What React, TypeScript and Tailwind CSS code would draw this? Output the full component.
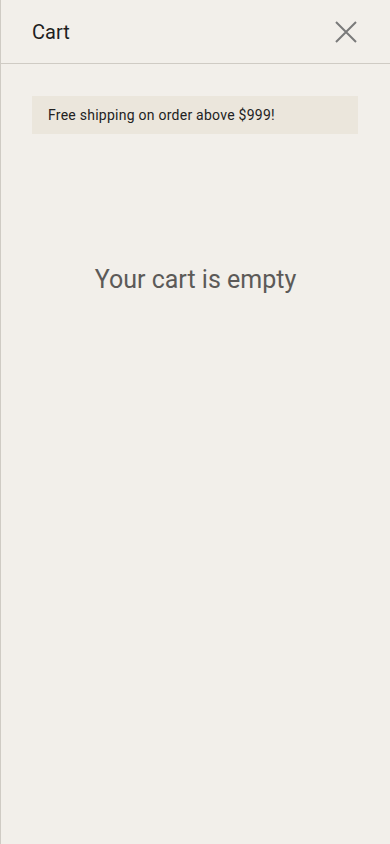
export default function App() {
  return (
    <div
      className="min-h-[844px] w-full bg-[#f2efea] border-l border-[#cfcbc4] flex flex-col"
      style={{ fontFamily: "Roboto, 'Liberation Sans', sans-serif" }}
    >
      {/* HEADER */}
      <div className="h-16 flex items-center justify-between pl-[31px] pr-[33px] border-b border-[#cfcbc4]">
        <h2 className="text-[20px] text-[#1f1f1f] leading-none">Cart</h2>
        <button aria-label="Close" className="text-[#7a7a7a]">
          <svg width="22" height="22" viewBox="0 0 22 22" fill="none" stroke="currentColor" strokeWidth="2">
            <path d="M1 1L21 21M21 1L1 21" />
          </svg>
        </button>
      </div>

      <div className="pl-[31px] pr-8 pt-8">
        <div className="bg-[#ebe6dc] h-[38px] flex items-center px-4 text-[14px] text-[#222] tracking-[0.25px]">
          Free shipping on order above $999!
        </div>
      </div>

      <p className="mt-[127px] text-center text-[25px] text-[#5c5a58]">Your cart is empty</p>
    </div>
  );
}
